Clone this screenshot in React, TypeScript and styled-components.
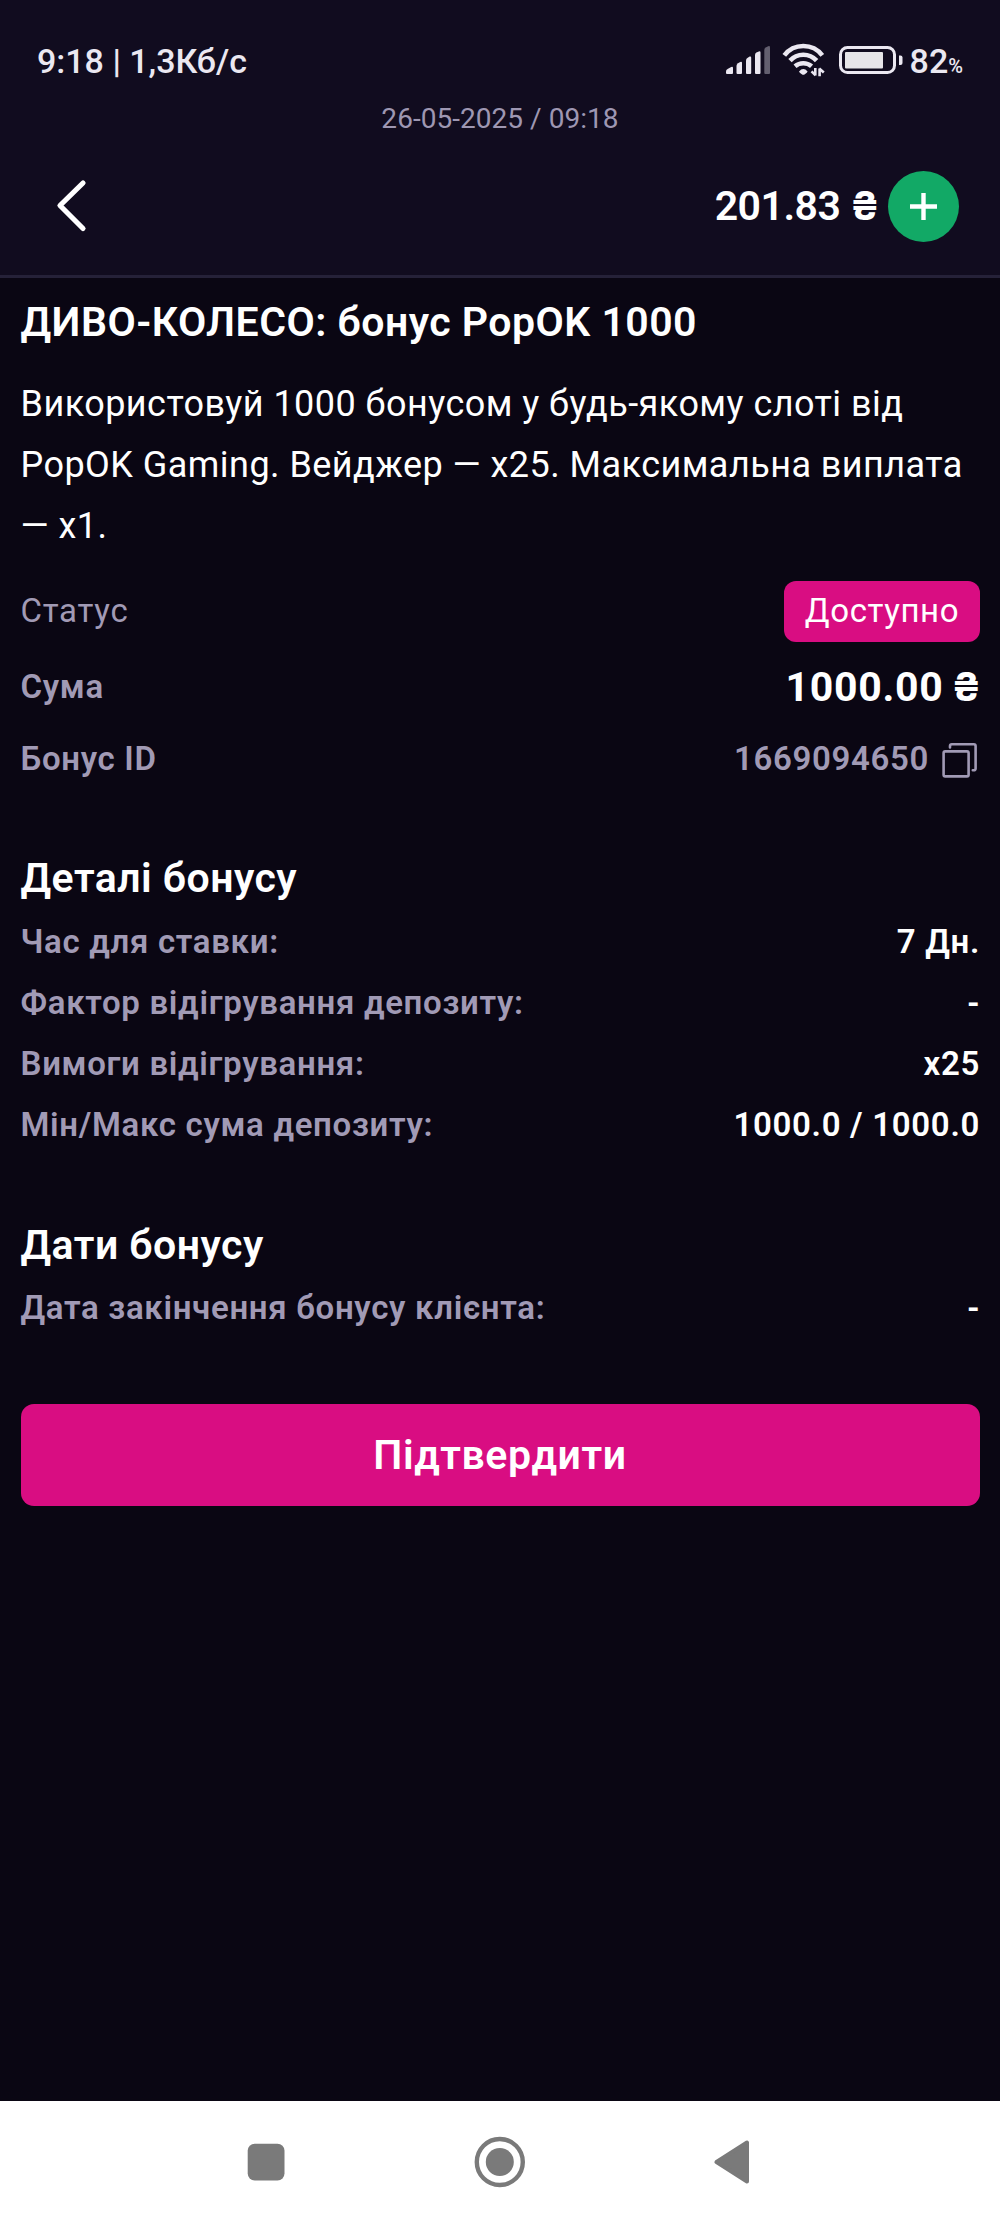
import React from 'react';
import styled, { createGlobalStyle } from 'styled-components';

const GlobalStyle = createGlobalStyle`
  html, body { margin: 0; padding: 0; background: #0a0613; }
  * { box-sizing: border-box; }
`;

const Screen = styled.div`
  display: flex;
  flex-direction: column;
  width: 1000px;
  height: 2222px;
  background: #0a0613;
  color: #ffffff;
  font-family: Roboto, 'Noto Sans', sans-serif;
`;

const Header = styled.header`
  height: 278px;
  background: #110c1f;
  border-bottom: 3px solid #252138;
`;

const StatusBar = styled.div`
  display: flex;
  justify-content: space-between;
  align-items: center;
  height: 96px;
  padding: 27px 37px 0 37px;
  color: #ebe8f1;
  font-size: 34px;
  font-weight: 500;
  line-height: 69px;
  white-space: pre;
`;

const StatusIcons = styled.div`
  display: flex;
  align-items: center;

  svg { display: block; margin-bottom: 4px; }
`;

const BatteryLevel = styled.span`
  margin-left: 6px;
`;

const Percent = styled.span`
  font-size: 20px;
  line-height: 1;
`;

const DateLine = styled.div`
  height: 45px;
  line-height: 45px;
  text-align: center;
  font-size: 28px;
  letter-spacing: 0.04px;
  color: #9e97b2;
`;

const NavRow = styled.div`
  display: flex;
  justify-content: space-between;
  align-items: center;
  height: 131px;
  padding: 0 41px 0 56px;
`;

const IconButton = styled.button`
  display: flex;
  align-items: center;
  padding: 0;
  border: 0;
  background: none;
`;

const BackButton = styled(IconButton)`
  margin-bottom: 2px;
`;

const Balance = styled.div`
  display: flex;
  align-items: center;
  gap: 8.5px;
  font-size: 41px;
  font-weight: 600;
`;

const BalanceAmount = styled.span`
  display: flex;
  align-items: baseline;
  gap: 9.5px;
  margin-bottom: 2px;
  line-height: 60px;
  letter-spacing: -0.5px;
`;

const Currency = styled.span`
  font-family: Inter, sans-serif;
  font-size: 40px;
  font-weight: 700;
  letter-spacing: 0;
`;

const AddButton = styled(IconButton)`
  justify-content: center;
  width: 71px;
  height: 71px;
  border-radius: 50%;
  background: #12a966;
`;

const Content = styled.main`
  flex: 1;
  padding: 0 20px 0 20.5px;
`;

const Title = styled.h1`
  margin: 1px 0 8px;
  font-size: 41px;
  font-weight: 600;
  line-height: 87px;
  letter-spacing: 0.48px;
`;

const Description = styled.p`
  margin: 0 0 22.8px;
  font-size: 36px;
  line-height: 61.2px;
  letter-spacing: 0.46px;
`;

const Row = styled.div<{ $after?: number }>`
  display: flex;
  justify-content: space-between;
  align-items: center;
  height: 61.2px;
  margin-bottom: ${p => p.$after ?? 0}px;
  font-size: 33px;
  line-height: 61.2px;
`;

const Label = styled.span<{ $regular?: boolean }>`
  color: #a19ab5;
  font-weight: ${p => (p.$regular ? 400 : 600)};
  letter-spacing: ${p => (p.$regular ? 0.76 : 0.68)}px;
`;

const Value = styled.span`
  font-weight: 600;
  letter-spacing: 0.69px;
`;

const Sum = styled.span`
  display: flex;
  align-items: baseline;
  gap: 8px;
  margin-right: -1px;
  font-size: 41px;
  font-weight: 700;
  letter-spacing: 0.7px;
`;

const Badge = styled.span`
  width: 196px;
  height: 61px;
  border-radius: 12px;
  background: #d90d82;
  text-align: center;
  line-height: 60px;
  letter-spacing: 0.62px;
`;

const BonusId = styled.span`
  display: flex;
  align-items: center;
  gap: 13px;
  color: #a19ab5;
  font-weight: 600;
  letter-spacing: 0.65px;
`;

const SectionTitle = styled.h2`
  margin: 0 0 1.7px;
  font-size: 41px;
  font-weight: 600;
  line-height: 61px;
  letter-spacing: 0.47px;
`;

const ConfirmButton = styled.button`
  display: block;
  width: 959px;
  height: 102px;
  padding: 0;
  border: 0;
  border-radius: 13px;
  background: #d90d82;
  color: #ffffff;
  font-family: inherit;
  font-size: 41px;
  font-weight: 600;
  letter-spacing: 0.66px;
`;

const SystemNav = styled.nav`
  display: flex;
  align-items: center;
  height: 121px;
  padding-left: 247px;
  background: #ffffff;
`;

const NavButton = styled(IconButton)<{ $gap?: number }>`
  margin-left: ${p => p.$gap ?? 0}px;
`;

const WifiSvg = styled.svg`
  margin-left: 11px;
`;

const BatterySvg = styled.svg`
  margin-left: 12px;
`;

const SignalIcon = () => (
  <svg width="45" height="30" viewBox="0 0 45 30" fill="#ebe8f1">
    <path d="M0 26.5Q0 24.8 1.6 23.9L5.2 22Q7 21.3 7 23V28Q7 29 6 29H1Q0 29 0 28Z" />
    <path d="M10.5 20.8Q10.5 19.3 12 18.3L14.2 17Q16 16.2 16 18V28Q16 29 15 29H11.5Q10.5 29 10.5 28Z" />
    <path d="M20 15.4Q20 13.8 21.4 12.9L23.6 11.6Q25.2 11 25.2 12.8V28Q25.2 29 24.2 29H21Q20 29 20 28Z" />
    <path d="M29 10Q29 8.5 30.4 7.6L32.8 6.4Q34.5 5.7 34.5 7.5V28Q34.5 29 33.5 29H30Q29 29 29 28Z" />
    <path d="M38.3 5Q38.3 3.5 39.7 2.6L42.2 1.3Q44 .6 44 2.4V28Q44 29 43 29H39.3Q38.3 29 38.3 28Z" opacity=".38" />
  </svg>
);

const WifiIcon = () => (
  <WifiSvg width="44" height="34" viewBox="0 0 44 34">
    <g fill="none" stroke="#ebe8f1" strokeWidth="4.6">
      <path d="M2.3 12.3A24 24 0 0 1 40.3 12.3" />
      <path d="M8 17.6A18 18 0 0 1 34.6 17.6" />
      <path d="M13 23.2A13 13 0 0 1 29.6 23.2" />
    </g>
    <path d="M17 28.4Q21.3 23.6 25.6 28.4Q25.4 29.4 22.8 31.2Q21.3 32.2 19.8 31.2Q17.2 29.4 17 28.4Z" fill="#ebe8f1" />
    <path d="M28.5 24.6H42V34H28.5Z" fill="#110c1f" />
    <path
      d="M33.3 25V32.4M29.5 28.4L33.6 32.2M37.6 33.2V25.6M41.8 29.6L37.2 25.6"
      fill="none"
      stroke="#ebe8f1"
      strokeWidth="2.6"
    />
  </WifiSvg>
);

const BatteryIcon = () => (
  <BatterySvg width="66" height="30" viewBox="0 0 66 30">
    <rect x="2.5" y="2.5" width="54" height="25" rx="7" fill="none" stroke="#ebe8f1" strokeWidth="3" />
    <rect x="7" y="7" width="38" height="16.5" rx="1" fill="#e6e5e8" />
    <path d="M61 10.5H62.5Q64.5 10.5 64.5 12.5V18Q64.5 20 62.5 20H61Z" fill="#ebe8f1" />
  </BatterySvg>
);

const BackIcon = () => (
  <svg width="32" height="54" viewBox="0 0 32 54">
    <path d="M27 4L4 26.5L27 49.5" fill="none" stroke="#fff" strokeWidth="5.2" strokeLinecap="round" strokeLinejoin="round" />
  </svg>
);

const PlusIcon = () => (
  <svg width="27" height="27" viewBox="0 0 27 27">
    <path d="M13.5 0V27M0 13.5H27" stroke="#fff" strokeWidth="4.4" />
  </svg>
);

const CopyIcon = () => (
  <svg width="38" height="44" viewBox="0 0 38 44" fill="none" stroke="#a19ab5" strokeWidth="2.6" strokeLinecap="round">
    <rect x="1.6" y="15.4" width="25" height="25" rx="1.6" />
    <path d="M8 11.4V10Q8 8.2 9.8 8.2H31.8Q33.6 8.2 33.6 10V32.4Q33.6 34.2 31.6 34.2H30.8" />
  </svg>
);

const details: [string, string][] = [
  ['Час для ставки:', '7 Дн.'],
  ['Фактор відігрування депозиту:', '-'],
  ['Вимоги відігрування:', 'x25'],
  ['Мін/Макс сума депозиту:', '1000.0 / 1000.0'],
];

export default function App() {
  return (
    <Screen>
      <GlobalStyle />
      <Header>
        <StatusBar>
          <span>9:18 | 1,3Кб/с</span>
          <StatusIcons>
            <SignalIcon />
            <WifiIcon />
            <BatteryIcon />
            <BatteryLevel>82<Percent>%</Percent></BatteryLevel>
          </StatusIcons>
        </StatusBar>
        <DateLine>26-05-2025 / 09:18</DateLine>
        <NavRow>
          <BackButton aria-label="Назад"><BackIcon /></BackButton>
          <Balance>
            <BalanceAmount><span>201.83</span><Currency>₴</Currency></BalanceAmount>
            <AddButton aria-label="Поповнити"><PlusIcon /></AddButton>
          </Balance>
        </NavRow>
      </Header>
      <Content>
        <Title>ДИВО-КОЛЕСО: бонус PopOK 1000</Title>
        <Description>
          Використовуй 1000 бонусом у будь-якому слоті від PopOK Gaming. Вейджер — x25. Максимальна виплата — x1.
        </Description>
        <Row $after={14.5}>
          <Label $regular>Статус</Label>
          <Badge>Доступно</Badge>
        </Row>
        <Row $after={10.6}>
          <Label>Сума</Label>
          <Sum><span>1000.00</span><Currency>₴</Currency></Sum>
        </Row>
        <Row $after={59}>
          <Label>Бонус ID</Label>
          <BonusId>1669094650<CopyIcon /></BonusId>
        </Row>
        <SectionTitle>Деталі бонусу</SectionTitle>
        {details.map(([label, value], i) => (
          <Row key={label} $after={i === details.length - 1 ? 59 : 0}>
            <Label>{label}</Label>
            <Value>{value}</Value>
          </Row>
        ))}
        <SectionTitle>Дати бонусу</SectionTitle>
        <Row $after={65.6}>
          <Label>Дата закінчення бонусу клієнта:</Label>
          <Value>-</Value>
        </Row>
        <ConfirmButton>Підтвердити</ConfirmButton>
      </Content>
      <SystemNav>
        <NavButton aria-label="Останні">
          <svg width="38" height="38" viewBox="0 0 38 38"><rect x=".7" y=".7" width="36.8" height="36.8" rx="7" fill="#7a7a7a" /></svg>
        </NavButton>
        <NavButton aria-label="Додому" $gap={189}>
          <svg width="52" height="52" viewBox="0 0 52 52" fill="#7a7a7a">
            <circle cx="25.8" cy="26" r="23" fill="none" stroke="#7a7a7a" strokeWidth="4.4" />
            <circle cx="25.8" cy="26" r="14" />
          </svg>
        </NavButton>
        <NavButton aria-label="Назад" $gap={188}>
          <svg width="36" height="44" viewBox="0 0 36 44">
            <path d="M2.5 22L33 2.5V41.5Z" fill="#7a7a7a" stroke="#7a7a7a" strokeWidth="4" strokeLinejoin="round" />
          </svg>
        </NavButton>
      </SystemNav>
    </Screen>
  );
}
